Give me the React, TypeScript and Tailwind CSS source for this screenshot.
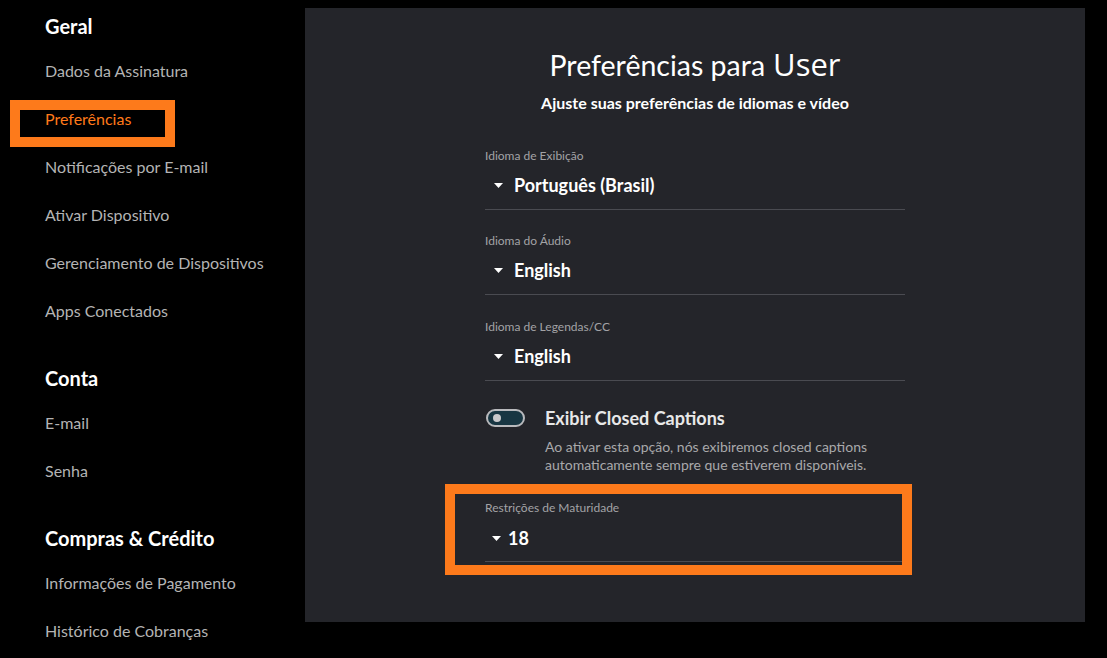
import React from "react";

function Caret({ className = "" }: { className?: string }) {
  return (
    <svg width="9" height="5" viewBox="0 0 9 5" className={className}>
      <path d="M0 0 L9 0 L4.5 5 Z" fill="#ffffff" />
    </svg>
  );
}

function SelectField({ label, value }: { label: string; value: string }) {
  return (
    <div className="flex flex-col">
      <div className="text-[12px] leading-[16px] text-[#a3a3a6]">{label}</div>
      <div className="mt-[9px] flex items-center h-[24px] pl-[9px]">
        <Caret />
        <span className="ml-[11px] text-[18px] leading-[24px] font-bold text-white">{value}</span>
      </div>
      <div className="mt-[12px] h-px bg-[#4a4b51]" />
    </div>
  );
}

const SideItem = ({ children, active = false }: { children: React.ReactNode; active?: boolean }) => (
  <div className={`h-[48px] flex items-center text-[16px] ${active ? "text-[#ff7a1a]" : "text-[#b4b4b4]"}`}>{children}</div>
);

const SideHead = ({ children }: { children: React.ReactNode }) => (
  <div className="h-[24px] flex items-center text-[20px] font-bold text-white mb-[9px]">{children}</div>
);

export default function App() {
  return (
    <div className="relative w-[1107px] h-[658px] bg-black flex overflow-hidden font-['Lato','Noto_Sans',sans-serif]">
      <aside className="w-[305px] shrink-0 pl-[45px] pt-[14px] flex flex-col">
        <SideHead>Geral</SideHead>
        <SideItem>Dados da Assinatura</SideItem>
        <SideItem active>Preferências</SideItem>
        <SideItem>Notificações por E-mail</SideItem>
        <SideItem>Ativar Dispositivo</SideItem>
        <SideItem>Gerenciamento de Dispositivos</SideItem>
        <SideItem>Apps Conectados</SideItem>
        <div className="mt-[31px]">
          <SideHead>Conta</SideHead>
        </div>
        <SideItem>E-mail</SideItem>
        <SideItem>Senha</SideItem>
        <div className="mt-[31px]">
          <SideHead>Compras &amp; Crédito</SideHead>
        </div>
        <SideItem>Informações de Pagamento</SideItem>
        <SideItem>Histórico de Cobranças</SideItem>
      </aside>

      <main className="mt-[8px] w-[780px] h-[614px] bg-[#24252a] flex flex-col items-center">
        <h1 className="pt-[38px] h-[75px] text-[28.5px] leading-[36px] text-white flex items-baseline">
          <span>Preferências para</span>
          <span className="ml-[8px] font-['Open_Sans',sans-serif] text-[31px] font-normal">User</span>
        </h1>
        <p className="mt-[10px] text-[16px] leading-[20px] font-bold text-white">
          Ajuste suas preferências de idiomas e vídeo
        </p>

        <div className="w-[420px] mt-[35px] flex flex-col">
          <SelectField label="Idioma de Exibição" value="Português (Brasil)" />
          <div className="mt-[23px]">
            <SelectField label="Idioma do Áudio" value="English" />
          </div>
          <div className="mt-[24px]">
            <SelectField label="Idioma de Legendas/CC" value="English" />
          </div>

          <div className="mt-[25px] flex items-center h-[24px]">
            <div className="ml-[1px] w-[39px] h-[18px] rounded-full border-2 border-[#b9babd] bg-[#183642] flex items-center pl-[5px]">
              <div className="w-[8px] h-[8px] rounded-full bg-[#c9c9cb]" />
            </div>
            <span className="ml-[20px] text-[18px] leading-[24px] font-bold text-[#e8e8e8]">Exibir Closed Captions</span>
          </div>
          <p className="mt-[8px] ml-[60px] text-[14px] leading-[18px] text-[#a9a9ab]">
            Ao ativar esta opção, nós exibiremos closed captions
            <br />
            automaticamente sempre que estiverem disponíveis.
          </p>

          <div className="mt-[26px] flex flex-col">
            <div className="text-[12px] leading-[16px] text-[#a3a3a6]">Restrições de Maturidade</div>
            <div className="mt-[10px] flex items-center h-[24px] pl-[7px]">
              <Caret />
              <span className="ml-[7px] text-[18px] leading-[24px] font-bold text-white">18</span>
            </div>
            <div className="mt-[11px] h-px bg-[#4a4b51]" />
          </div>
        </div>
      </main>

      <div className="absolute left-[10px] top-[100px] w-[165px] h-[47px] border-[10px] border-[#fd7a1b]" />
      <div className="absolute left-[445px] top-[484px] w-[467px] h-[91px] border-[10px] border-[#fd7a1b]" />
    </div>
  );
}
